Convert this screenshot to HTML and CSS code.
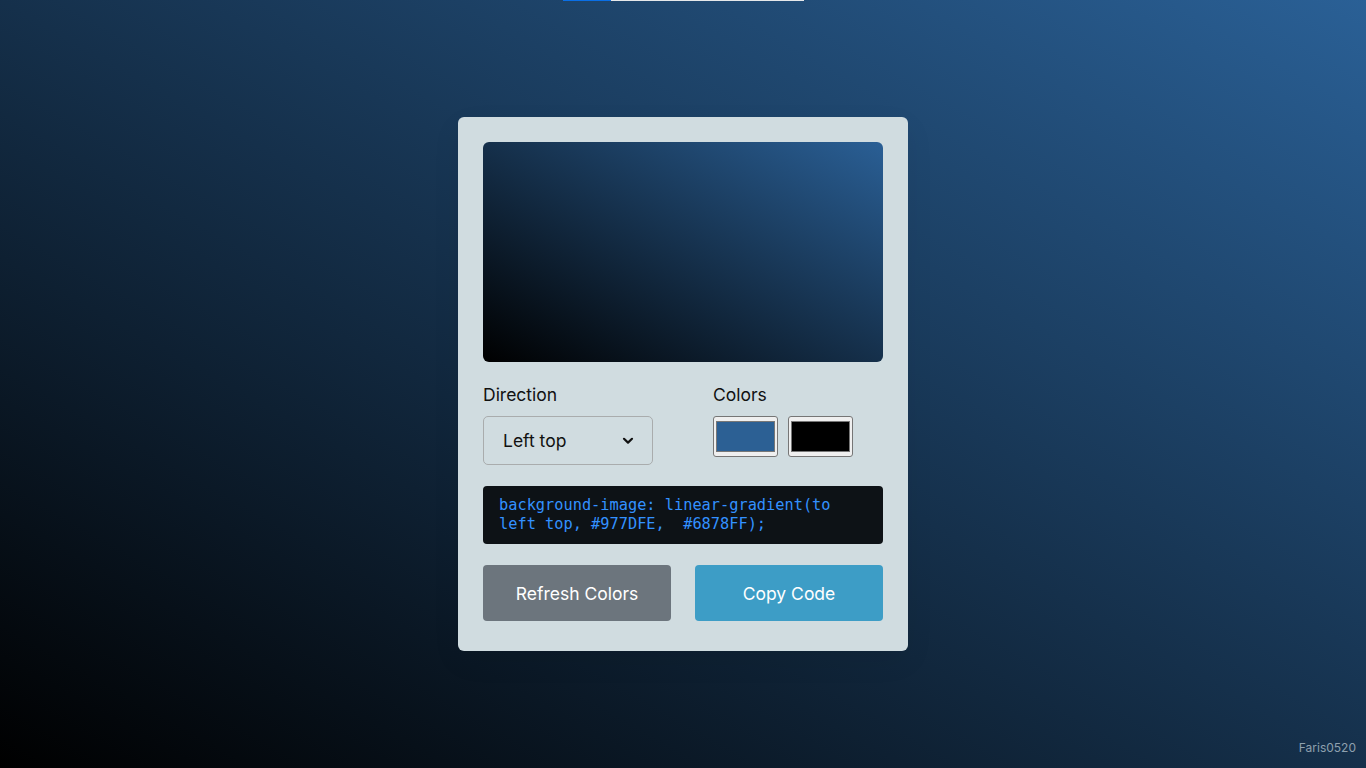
FILE: index.html
```html
<!DOCTYPE html>
<html lang="en">
<head>
<meta charset="UTF-8">
<title>Gradient Generator</title>
<link rel="stylesheet" href="styles.css">
</head>
<body>
<div class="loader"><span class="loader-fill"></span></div>
<main class="wrapper">
  <div class="gradient-box"></div>
  <div class="row options">
    <div class="column direction">
      <p class="label">Direction</p>
      <div class="select-box">
        <span>Left top</span>
        <svg class="chev" width="12" height="8" viewBox="0 0 12 8"><path d="M2 1.8 L6 5.6 L10 1.8" fill="none" stroke="#111" stroke-width="2.2" stroke-linecap="round" stroke-linejoin="round"/></svg>
      </div>
    </div>
    <div class="column palette">
      <p class="label">Colors</p>
      <div class="swatches">
        <div class="swatch"><span class="swatch-fill blue"></span></div>
        <div class="swatch"><span class="swatch-fill black"></span></div>
      </div>
    </div>
  </div>
  <div class="code">background-image: linear-gradient(to left top, #977DFE,  #6878FF);</div>
  <div class="row buttons">
    <button class="refresh">Refresh Colors</button>
    <button class="copy">Copy Code</button>
  </div>
</main>
<div class="credit">Faris0520</div>
</body>
</html>
```

FILE: styles.css
```css
* { box-sizing: border-box; margin: 0; padding: 0; }
html, body { height: 100%; }
body {
  font-family: Inter, "Open Sans", sans-serif;
  background: linear-gradient(to top right, #000000, #2a6096);
  display: flex;
  align-items: center;
  justify-content: center;
  min-height: 768px;
  overflow: hidden;
  position: relative;
}
.loader {
  position: absolute;
  top: 0;
  left: 563px;
  width: 241px;
  height: 1px;
  background: #e6e8ea;
}
.loader-fill {
  display: block;
  width: 48px;
  height: 1px;
  background: #0a6fe6;
}
.wrapper {
  width: 450px;
  height: 534px;
  background: #d0dce0;
  border-radius: 6px;
  padding: 25px 25px 30px;
  box-shadow: 0 10px 30px rgba(0, 0, 0, 0.06);
}
.gradient-box {
  height: 220px;
  border-radius: 6px;
  background: linear-gradient(to top right, #000000, #2a5f95);
}
.row { display: flex; }
.options { margin-top: 22px; }
.direction { width: 230px; }
.label {
  font-size: 17.5px;
  color: #111;
  line-height: 22px;
  margin-bottom: 10px;
}
.select-box {
  width: 170px;
  height: 49px;
  border: 1px solid #a9acad;
  border-radius: 5px;
  display: flex;
  align-items: center;
  justify-content: space-between;
  padding: 0 18px 0 19px;
  font-size: 17.5px;
  color: #111;
}
.chev { margin-top: 1px; }
.swatches { display: flex; gap: 10px; }
.swatch {
  width: 65px;
  height: 41px;
  background: #efefef;
  border: 1px solid #767676;
  border-radius: 3px;
  padding: 4px 2px;
}
.swatch-fill {
  display: block;
  height: 100%;
  border: 1px solid #777;
}
.swatch-fill.blue { background: #2c6094; }
.swatch-fill.black { background: #000; }
.code {
  margin-top: 21px;
  height: 58px;
  background: #0d1216;
  border-radius: 4px;
  padding: 10px 20px 10px 16px;
  font-family: "DejaVu Sans Mono", "Liberation Mono", monospace;
  font-size: 15.3px;
  line-height: 19px;
  color: #3391ff;
  white-space: pre-wrap;
  word-break: normal;
}
.buttons {
  margin-top: 21px;
  gap: 24px;
}
.buttons button {
  flex: 1;
  height: 56px;
  border: none;
  border-radius: 4px;
  color: #fff;
  font-family: Inter, "Open Sans", sans-serif;
  font-size: 17.5px;
}
.refresh { background: #6c757d; }
.copy { background: #3d9dc6; }
.credit {
  position: absolute;
  right: 10px;
  bottom: 13px;
  font-size: 12px;
  color: #8ea0ae;
}
```
